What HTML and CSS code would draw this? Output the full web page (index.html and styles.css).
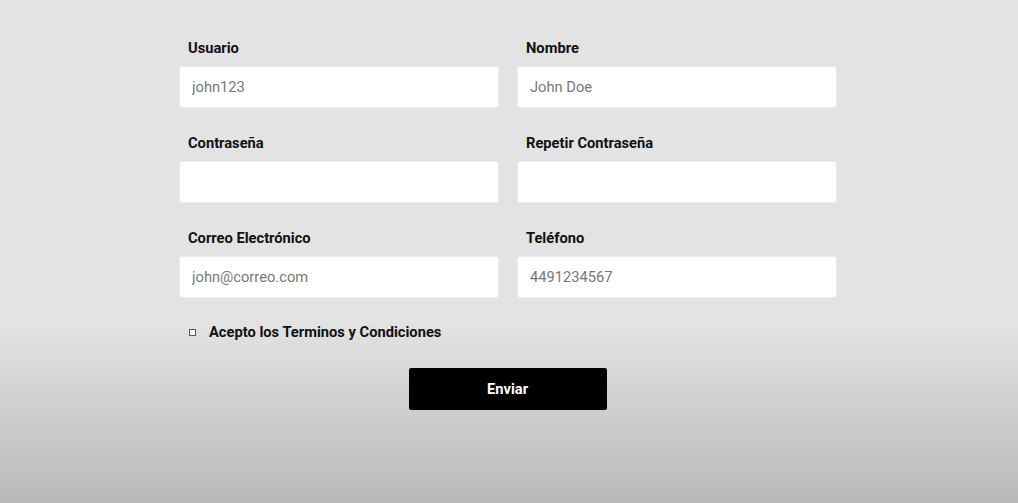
FILE: index.html
```html
<!DOCTYPE html>
<html lang="es">
<head>
<meta charset="utf-8">
<link rel="stylesheet" href="styles.css">
</head>
<body>
<form class="form">
  <div class="grid">
    <div class="field">
      <label class="label">Usuario</label>
      <input class="input" type="text" placeholder="john123">
    </div>
    <div class="field">
      <label class="label">Nombre</label>
      <input class="input" type="text" placeholder="John Doe">
    </div>
    <div class="field">
      <label class="label">Contraseña</label>
      <input class="input" type="password">
    </div>
    <div class="field">
      <label class="label">Repetir Contraseña</label>
      <input class="input" type="password">
    </div>
    <div class="field">
      <label class="label">Correo Electrónico</label>
      <input class="input" type="email" placeholder="john@correo.com">
    </div>
    <div class="field">
      <label class="label">Teléfono</label>
      <input class="input" type="tel" placeholder="4491234567">
    </div>
  </div>
  <div class="terms">
    <span class="check"></span>
    <span class="terms-text">Acepto los Terminos y Condiciones</span>
  </div>
  <div class="actions">
    <button type="button" class="btn">Enviar</button>
  </div>
</form>
</body>
</html>
```
FILE: styles.css
```css
html, body {
  margin: 0;
  height: 100%;
}
body {
  font-family: Roboto, "Liberation Sans", sans-serif;
  background: linear-gradient(to bottom, #e3e3e3 0px, #e3e3e3 320px, #b9b9b9 503px);
  background-repeat: no-repeat;
  min-height: 503px;
}
.form {
  width: 658px;
  margin-left: 179px;
  padding-top: 40px;
}
.grid {
  display: grid;
  grid-template-columns: 320px 320px;
  column-gap: 18px;
  row-gap: 27px;
}
.field {
  display: flex;
  flex-direction: column;
}
.label {
  font-weight: 700;
  font-size: 14.7px;
  line-height: 17px;
  color: #111;
  padding-left: 9px;
  margin-bottom: 9px;
}
.input {
  box-sizing: border-box;
  height: 42px;
  border: 1px solid #ececec;
  border-radius: 3px;
  background: #fff;
  padding: 0 12px;
  font-family: Roboto, "Liberation Sans", sans-serif;
  font-size: 14.7px;
  color: #333;
  outline: none;
}
.input::placeholder {
  color: #777;
}
.terms {
  display: flex;
  align-items: center;
  margin-top: 24px;
  padding-left: 10px;
  height: 20px;
}
.check {
  box-sizing: border-box;
  width: 7px;
  height: 7px;
  border: 1px solid #555;
  background: #fff;
  margin-right: 13px;
}
.terms-text {
  font-weight: 700;
  font-size: 14.7px;
  color: #111;
}
.actions {
  display: flex;
  justify-content: center;
  margin-top: 26px;
}
.btn {
  width: 198px;
  height: 42px;
  background: #000;
  color: #fff;
  border: none;
  border-radius: 2px;
  font-family: Roboto, "Liberation Sans", sans-serif;
  font-weight: 700;
  font-size: 14.7px;
  margin-left: -1px;
}
```
